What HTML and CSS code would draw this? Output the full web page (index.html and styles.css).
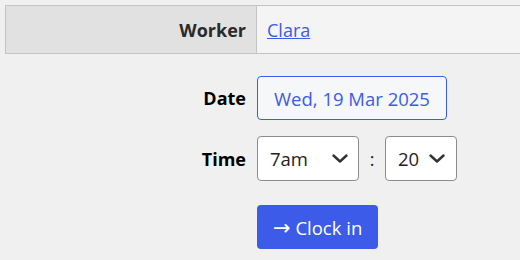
FILE: index.html
```html
<!DOCTYPE html>
<html>
<head>
<meta charset="utf-8">
<link rel="stylesheet" href="styles.css">
</head>
<body>
<table class="info">
  <tr>
    <th>Worker</th>
    <td><a href="#">Clara</a></td>
  </tr>
</table>
<form class="form">
  <label class="lbl">Date</label>
  <div><button type="button" class="date">Wed, 19 Mar 2025</button></div>
  <label class="lbl">Time</label>
  <div class="time">
    <span class="sel sel-h">
      <select><option>7am</option></select>
      <svg class="chev" viewBox="0 0 16 9" width="16" height="9"><path d="M1.5 1.5 L8 7.5 L14.5 1.5" fill="none" stroke="#333" stroke-width="2.4" stroke-linecap="round" stroke-linejoin="round"/></svg>
    </span>
    <span class="colon">:</span>
    <span class="sel sel-m">
      <select><option>20</option></select>
      <svg class="chev" viewBox="0 0 16 9" width="16" height="9"><path d="M1.5 1.5 L8 7.5 L14.5 1.5" fill="none" stroke="#333" stroke-width="2.4" stroke-linecap="round" stroke-linejoin="round"/></svg>
    </span>
  </div>
  <span></span>
  <div><button type="button" class="go"><span class="arrow">→</span> Clock in</button></div>
</form>
</body>
</html>
```
FILE: styles.css
```css
html, body {
  margin: 0;
  padding: 0;
  background: #f0f0f0;
}
body {
  padding: 5px;
  font-family: "Open Sans", "Noto Sans", sans-serif;
  font-size: 18px;
  color: #222;
}
.info {
  border-collapse: collapse;
  width: 530px;
  border: 1px solid #c4c4c4;
}
.info th {
  width: 230px;
  background: #e1e1e1;
  text-align: right;
  font-weight: 700;
  color: #2a2a2a;
  padding: 0 10px;
  height: 47px;
  border-right: 1px solid #c4c4c4;
}
.info td {
  background: #f4f4f4;
  padding: 0 10px;
}
.info a {
  color: #3b5be8;
}
.form {
  display: grid;
  grid-template-columns: 241px auto;
  column-gap: 11px;
  row-gap: 16px;
  align-items: center;
  margin-top: 22px;
}
.lbl {
  text-align: right;
  font-weight: 700;
  color: #000;
}
.date {
  font: inherit;
  font-size: 18.5px;
  color: #3b5be8;
  background: #f5f7f9;
  border: 1px solid #3b5be8;
  border-radius: 4px;
  height: 44px;
  padding: 0 16px;
}
.time {
  display: flex;
  align-items: center;
}
.sel {
  position: relative;
  display: inline-block;
}
.sel select {
  appearance: none;
  -webkit-appearance: none;
  font: inherit;
  font-size: 18.5px;
  color: #222;
  background: #fff;
  border: 1px solid #8c8c8c;
  border-radius: 4px;
  height: 45px;
  padding: 0 12px;
  display: block;
}
.sel-h select { width: 102px; }
.sel-m select { width: 72px; }
.chev {
  position: absolute;
  top: 18px;
  pointer-events: none;
}
.sel-h .chev { left: 75px; }
.sel-m .chev { left: 44px; }
.colon {
  width: 26px;
  text-align: center;
}
.go {
  font: inherit;
  font-size: 18.5px;
  color: #fff;
  background: #3b5be8;
  border: none;
  border-radius: 4px;
  height: 44px;
  padding: 0 16px;
  margin-top: 8px;
}
.arrow {
  font-family: "DejaVu Sans", sans-serif;
  font-size: 21px;
  line-height: 1;
}
```
